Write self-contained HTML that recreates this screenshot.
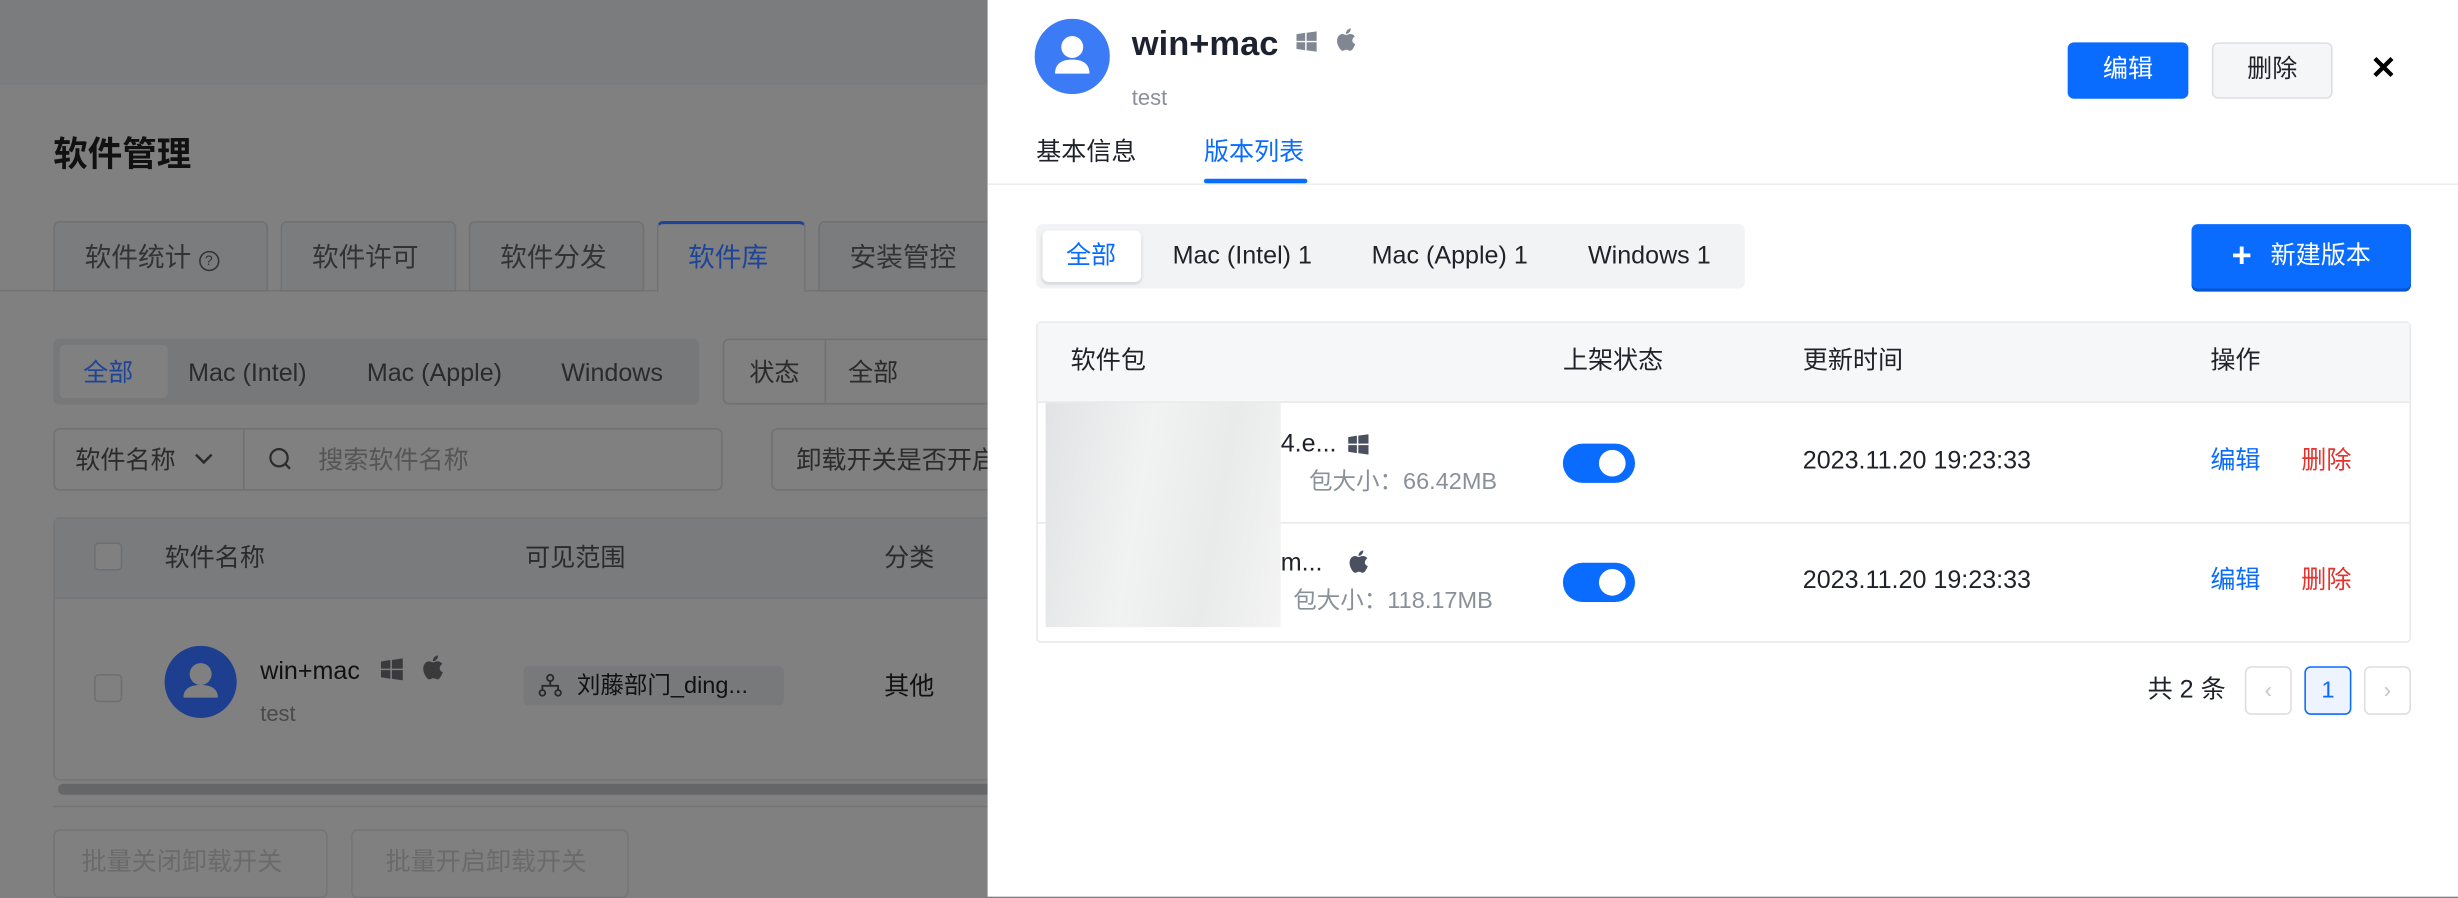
<!DOCTYPE html>
<html><head><meta charset="utf-8"><style>
*{box-sizing:border-box;margin:0;padding:0}
html,body{width:2458px;height:892px;overflow:hidden;background:#808080}
#w{position:absolute;left:0;top:0;width:1568px;height:572px;transform:scale(1.5676);transform-origin:0 0;font-family:"Liberation Sans","Noto Sans CJK SC",sans-serif;color:#222}
.a{position:absolute;white-space:nowrap;line-height:24px}
.L{color:#2b2b2b;font-size:16px}
.box{position:absolute;border:1px solid #707173;border-radius:4px}
.dr{position:absolute;left:630px;top:0;width:938px;height:572px;background:#fff}
.dr .a{color:#1f2329;font-size:16px}
.btn{position:absolute;border-radius:4px;display:flex;align-items:center;justify-content:center;font-size:16px;line-height:20px}
</style></head><body><div id="w">
<div class="a" style="left:0;top:0;width:630px;height:54px;background:#7b7c7e"></div>
<div class="a" style="left:34px;top:84px;font-size:22px;line-height:30px;font-weight:bold;color:#111">软件管理</div>
<div class="a" style="left:0;top:185px;width:630px;height:1px;background:#737476"></div>
<div class="box" style="left:34px;top:141px;width:137px;height:45px;background:#7b7c7e;border-radius:4px 4px 0 0"></div>
<div class="a L" style="left:54px;top:153px;font-size:17px;color:#333">软件统计 <span style="display:inline-block;width:13px;height:13px;border:1.3px solid #333;border-radius:50%;font-size:9px;text-align:center;line-height:11px;vertical-align:1px">?</span></div>
<div class="box" style="left:179px;top:141px;width:112px;height:45px;background:#7b7c7e;border-radius:4px 4px 0 0"></div>
<div class="a L" style="left:199px;top:153px;font-size:17px;color:#333">软件许可</div>
<div class="box" style="left:299px;top:141px;width:112px;height:45px;background:#7b7c7e;border-radius:4px 4px 0 0"></div>
<div class="a L" style="left:319px;top:153px;font-size:17px;color:#333">软件分发</div>
<div class="box" style="left:419px;top:141px;width:95px;height:45px;background:#808080;border-top:2px solid #1d4597;border-bottom:none;border-radius:4px 4px 0 0"></div>
<div class="a" style="left:439px;top:153px;font-size:17px;color:#1d4597">软件库</div>
<div class="box" style="left:522px;top:141px;width:115px;height:45px;background:#7b7c7e;border-radius:4px 4px 0 0"></div>
<div class="a L" style="left:542px;top:153px;font-size:17px;color:#333">安装管控</div>

<div class="a" style="left:34px;top:216px;width:412px;height:42px;background:#77787a;border-radius:4px"></div>
<div class="a" style="left:37px;top:219px;width:71px;height:36px;background:#808080;border-radius:4px;border:1px solid #767779"></div>
<div class="a" style="left:53px;top:227px;font-size:16px;color:#1d4597">全部</div>
<div class="a L" style="left:120px;top:227px">Mac (Intel)</div>
<div class="a L" style="left:234px;top:227px">Mac (Apple)</div>
<div class="a L" style="left:358px;top:227px">Windows</div>
<div class="box" style="left:461px;top:216px;width:180px;height:42px"></div>
<div class="a" style="left:526px;top:217px;width:1px;height:40px;background:#707173"></div>
<div class="a L" style="left:478px;top:227px">状态</div>
<div class="a L" style="left:541px;top:227px">全部</div>

<div class="box" style="left:34px;top:273px;width:427px;height:40px"></div>
<div class="a" style="left:155px;top:274px;width:1px;height:38px;background:#707173"></div>
<div class="a L" style="left:48px;top:283px">软件名称</div>
<svg class="a" style="left:124px;top:289px" width="12" height="8" viewBox="0 0 12 8"><path d="M1 1l5 5 5-5" stroke="#2b2b2b" stroke-width="1.6" fill="none"/></svg>
<svg class="a" style="left:171px;top:285px" width="16" height="16" viewBox="0 0 16 16"><circle cx="7" cy="7" r="5.5" stroke="#2b2b2b" stroke-width="1.4" fill="none"/><path d="M11 11l3 3" stroke="#2b2b2b" stroke-width="1.4"/></svg>
<div class="a" style="left:203px;top:283px;font-size:16px;color:#555">搜索软件名称</div>
<div class="box" style="left:492px;top:273px;width:160px;height:40px"></div>
<div class="a L" style="left:508px;top:283px">卸载开关是否开启</div>

<div class="box" style="left:34px;top:330px;width:620px;height:168px;border-color:#747577"></div>
<div class="a" style="left:35px;top:331px;width:600px;height:51px;background:#7a7b7d;border-bottom:1px solid #747577"></div>
<div class="a" style="left:60px;top:346px;width:18px;height:18px;border:1px solid #6e6f71;border-radius:3px;background:#808080"></div>
<div class="a L" style="left:105px;top:345px">软件名称</div>
<div class="a L" style="left:335px;top:345px">可见范围</div>
<div class="a L" style="left:564px;top:345px">分类</div>
<div class="a" style="left:60px;top:430px;width:18px;height:18px;border:1px solid #6e6f71;border-radius:3px;background:#808080"></div>
<div class="a" style="left:105px;top:412px;width:46px;height:46px;border-radius:50%;background:#1e3f8f"></div>
<svg class="a" style="left:105px;top:412px" width="46" height="46" viewBox="0 0 46 46"><circle cx="23" cy="18" r="7" fill="#808080"/><path d="M12 33c0-6 5-8 11-8s11 2 11 8z" fill="#808080"/></svg>
<div class="a" style="left:166px;top:417px;font-size:16px;color:#111">win+mac</div>
<svg class="a" style="left:243px;top:420px" width="14" height="14" viewBox="0 0 14 14"><path d="M0 2l6-1v5.5H0zM7 1l7-1v6.5H7zM0 7.5h6V13l-6-1zM7 7.5h7V14l-7-1z" fill="#3a3a3c"/></svg>
<svg class="a" style="left:269px;top:418px" width="14" height="16" viewBox="0 0 14 16"><path d="M11.5 8.5c0-2 1.6-2.9 1.7-3-1-1.4-2.4-1.6-2.9-1.6-1.2-.1-2.4.7-3 .7-.6 0-1.6-.7-2.6-.7C3.3 3.9 1 5.2 1 8.6c0 1.2.3 2.5.9 3.6.6 1.2 1.7 3.3 3 3.2 1 0 1.4-.7 2.6-.7s1.5.7 2.6.7c1.2 0 2.1-1.8 2.7-3 .5-.9.7-1.5.7-1.6-.1 0-2-.8-2-2.3zM9.5 2.7c.6-.7 1-1.6.9-2.6-.8 0-1.8.5-2.4 1.2-.5.6-1 1.6-.9 2.5.9.1 1.8-.4 2.4-1.1z" fill="#3a3a3c"/></svg>
<div class="a" style="left:166px;top:443px;font-size:14px;color:#4a4a4a">test</div>
<div class="a" style="left:334px;top:425px;width:166px;height:25px;background:#78797b;border-radius:3px"></div>
<svg class="a" style="left:343px;top:429px" width="16" height="16" viewBox="0 0 16 16" fill="none" stroke="#2b2b2b" stroke-width="1.2"><circle cx="8" cy="3.5" r="2"/><circle cx="3" cy="13" r="1.8"/><circle cx="13" cy="13" r="1.8"/><path d="M8 5.5v3M3 11V8.5h10V11"/></svg>
<div class="a" style="left:368px;top:426px;font-size:15px;color:#111">刘藤部门_ding...</div>
<div class="a" style="left:564px;top:427px;font-size:16px;color:#111">其他</div>
<div class="a" style="left:37px;top:500px;width:600px;height:7px;background:#656668;border-radius:4px"></div>
<div class="a" style="left:34px;top:514px;width:600px;height:1px;background:#747577"></div>
<div class="box" style="left:34px;top:529px;width:175px;height:44px;border-color:#747577"></div>
<div class="a" style="left:52px;top:539px;font-size:16px;color:#6a6a6a">批量关闭卸载开关</div>
<div class="box" style="left:224px;top:529px;width:177px;height:44px;border-color:#747577"></div>
<div class="a" style="left:246px;top:539px;font-size:16px;color:#6a6a6a">批量开启卸载开关</div>

<div class="dr">
<svg class="a" style="left:30px;top:12px" width="48" height="48" viewBox="0 0 48 48"><circle cx="24" cy="24" r="24" fill="#3b7bf6"/><circle cx="24" cy="18" r="7" fill="#fff"/><path d="M13 35c0-7 5-9 11-9s11 2 11 9z" fill="#fff"/></svg>
<div class="a" style="left:92px;top:13px;font-size:22px;line-height:30px;font-weight:bold;color:#1c2230">win+mac</div>
<svg class="a" style="left:197px;top:20px" width="13" height="13" viewBox="0 0 14 14"><path d="M0 2l6-1v5.5H0zM7 1l7-1v6.5H7zM0 7.5h6V13l-6-1zM7 7.5h7V14l-7-1z" fill="#808792"/></svg>
<svg class="a" style="left:222px;top:18px" width="13" height="15" viewBox="0 0 14 16"><path d="M11.5 8.5c0-2 1.6-2.9 1.7-3-1-1.4-2.4-1.6-2.9-1.6-1.2-.1-2.4.7-3 .7-.6 0-1.6-.7-2.6-.7C3.3 3.9 1 5.2 1 8.6c0 1.2.3 2.5.9 3.6.6 1.2 1.7 3.3 3 3.2 1 0 1.4-.7 2.6-.7s1.5.7 2.6.7c1.2 0 2.1-1.8 2.7-3 .5-.9.7-1.5.7-1.6-.1 0-2-.8-2-2.3zM9.5 2.7c.6-.7 1-1.6.9-2.6-.8 0-1.8.5-2.4 1.2-.5.6-1 1.6-.9 2.5.9.1 1.8-.4 2.4-1.1z" fill="#808792"/></svg>
<div class="a" style="left:92px;top:50px;font-size:14px;color:#8a909a">test</div>
<div class="btn" style="left:689px;top:27px;width:77px;height:36px;background:#0a6cff;color:#fff">编辑</div>
<div class="btn" style="left:781px;top:27px;width:77px;height:36px;background:#f5f6f7;border:1px solid #dcdee2;color:#1f2329">删除</div>
<div class="a" style="left:882px;top:32px;font-size:20px;font-weight:bold;color:#000">✕</div>
<div class="a" style="left:31px;top:86px">基本信息</div>
<div class="a" style="left:138px;top:86px;color:#0a6cff!important">版本列表</div>
<div class="a" style="left:138px;top:114px;width:66px;height:3px;background:#0a6cff;border-radius:2px"></div>
<div class="a" style="left:0;top:117px;width:938px;height:1px;background:#ebedf0"></div>

<div class="a" style="left:31px;top:143px;width:452px;height:41px;background:#f2f3f5;border-radius:4px"></div>
<div class="a" style="left:35px;top:147px;width:63px;height:33px;background:#fff;border-radius:4px;box-shadow:0 1px 2px rgba(0,0,0,.15)"></div>
<div class="a" style="left:50px;top:152px;color:#0a6cff!important">全部</div>
<div class="a" style="left:118px;top:152px">Mac (Intel) 1</div>
<div class="a" style="left:245px;top:152px">Mac (Apple) 1</div>
<div class="a" style="left:383px;top:152px">Windows 1</div>
<div class="btn" style="left:768px;top:143px;width:140px;height:41px;background:#0a6cff;color:#fff;box-shadow:0 2px 0 #0656d0"><span style="font-size:22px;font-weight:bold;margin-right:12px;margin-top:-2px">+</span>新建版本</div>

<div class="a" style="left:31px;top:205px;width:877px;height:205px;border:1px solid #e8e9eb;border-radius:3px"></div>
<div class="a" style="left:32px;top:206px;width:875px;height:51px;background:#f6f7f9;border-bottom:1px solid #e8e9eb"></div>
<div class="a" style="left:53px;top:219px">软件包</div>
<div class="a" style="left:367px;top:219px">上架状态</div>
<div class="a" style="left:520px;top:219px">更新时间</div>
<div class="a" style="left:780px;top:219px">操作</div>
<div class="a" style="left:32px;top:333px;width:875px;height:1px;background:#e8e9eb"></div>
<div class="a" style="left:37px;top:257px;width:150px;height:143px;background:linear-gradient(100deg,#e2e3e4,#f1f2f2 40%,#e9eaea 70%,#f4f4f4)"></div>
<div class="a" style="left:187px;top:272px">4.e...</div>
<svg class="a" style="left:230px;top:277px" width="13" height="13" viewBox="0 0 14 14"><path d="M0 2l6-1v5.5H0zM7 1l7-1v6.5H7zM0 7.5h6V13l-6-1zM7 7.5h7V14l-7-1z" fill="#4a5060"/></svg>
<div class="a" style="left:205px;top:296px;font-size:15px;color:#8a909a!important">包大小：66.42MB</div>
<div class="a" style="left:187px;top:348px">m...</div>
<svg class="a" style="left:230px;top:351px" width="13" height="15" viewBox="0 0 14 16"><path d="M11.5 8.5c0-2 1.6-2.9 1.7-3-1-1.4-2.4-1.6-2.9-1.6-1.2-.1-2.4.7-3 .7-.6 0-1.6-.7-2.6-.7C3.3 3.9 1 5.2 1 8.6c0 1.2.3 2.5.9 3.6.6 1.2 1.7 3.3 3 3.2 1 0 1.4-.7 2.6-.7s1.5.7 2.6.7c1.2 0 2.1-1.8 2.7-3 .5-.9.7-1.5.7-1.6-.1 0-2-.8-2-2.3zM9.5 2.7c.6-.7 1-1.6.9-2.6-.8 0-1.8.5-2.4 1.2-.5.6-1 1.6-.9 2.5.9.1 1.8-.4 2.4-1.1z" fill="#4a5060"/></svg>
<div class="a" style="left:195px;top:372px;font-size:15px;color:#8a909a!important">包大小：118.17MB</div>
<div class="a" style="left:367px;top:283px;width:46px;height:25px;background:#0a6cff;border-radius:13px"></div>
<div class="a" style="left:390px;top:287px;width:17px;height:17px;background:#fff;border-radius:50%"></div>
<div class="a" style="left:367px;top:359px;width:46px;height:25px;background:#0a6cff;border-radius:13px"></div>
<div class="a" style="left:390px;top:363px;width:17px;height:17px;background:#fff;border-radius:50%"></div>
<div class="a" style="left:520px;top:283px">2023.11.20 19:23:33</div>
<div class="a" style="left:520px;top:359px">2023.11.20 19:23:33</div>
<div class="a" style="left:780px;top:283px;color:#0a6cff!important">编辑</div>
<div class="a" style="left:838px;top:283px;color:#e5322d!important">删除</div>
<div class="a" style="left:780px;top:359px;color:#0a6cff!important">编辑</div>
<div class="a" style="left:838px;top:359px;color:#e5322d!important">删除</div>

<div class="a" style="left:740px;top:429px;font-size:16px">共 2 条</div>
<div class="a" style="left:802px;top:425px;width:30px;height:31px;border:1px solid #dcdee2;border-radius:4px;text-align:center;line-height:28px;color:#c0c4cc;font-size:14px">‹</div>
<div class="a" style="left:840px;top:425px;width:30px;height:31px;border:1px solid #0a6cff;background:#eef4ff;border-radius:4px;text-align:center;line-height:29px;color:#0a6cff!important;font-size:15px">1</div>
<div class="a" style="left:878px;top:425px;width:30px;height:31px;border:1px solid #dcdee2;border-radius:4px;text-align:center;line-height:28px;color:#c0c4cc;font-size:14px">›</div>
</div>
</div></body></html>
